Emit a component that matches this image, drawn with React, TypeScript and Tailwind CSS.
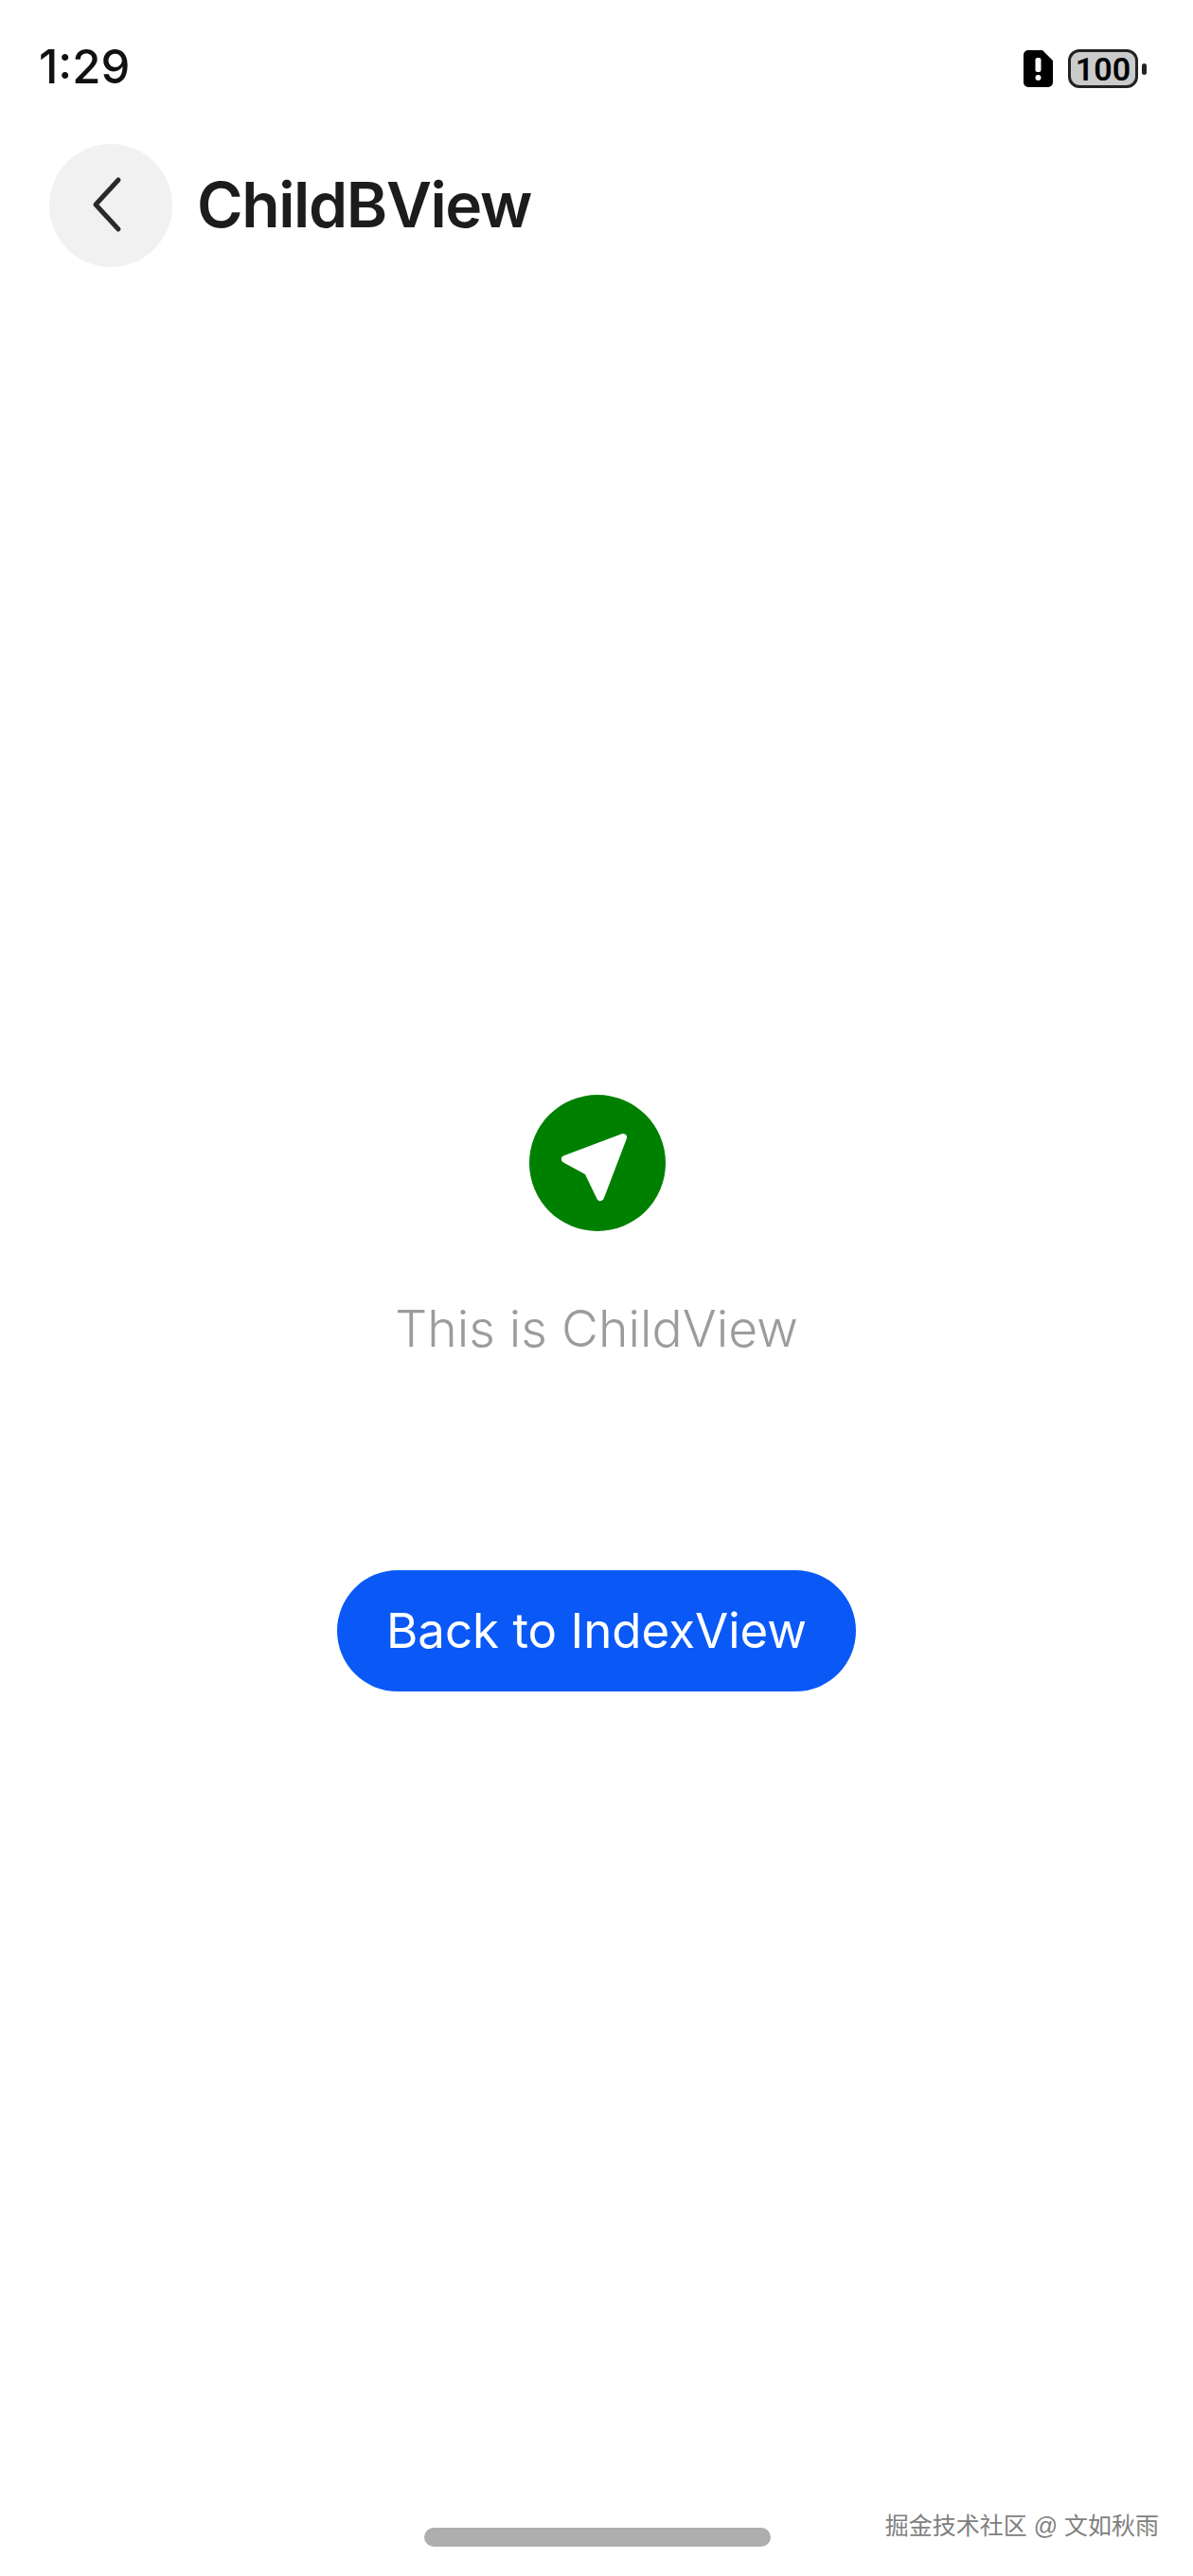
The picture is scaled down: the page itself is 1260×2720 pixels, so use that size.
const FONT = "font-['Inter','Noto_Sans',sans-serif]";

function StatusBar() {
  return (
    <div className="h-[152px] flex items-start justify-between pt-[46px] pl-[41px] pr-[49px]">
      <span className={`text-[49px] leading-[50px] font-medium text-[#111111] ${FONT}`}>1:29</span>
      <div className="flex items-center pt-[6px]">
        {/* sim warning */}
        <svg width="31" height="39" viewBox="0 0 31 39" className="mr-[16px]">
          <path d="M5 0H20L31 11V34a5 5 0 0 1-5 5H5a5 5 0 0 1-5-5V5a5 5 0 0 1 5-5Z" fill="#000000" />
          <rect x="12.5" y="8" width="6" height="15" rx="2" fill="#ffffff" />
          <rect x="12.5" y="26" width="6" height="6" rx="3" fill="#ffffff" />
        </svg>
        <div className="w-[74px] h-[41px] rounded-[12px] border-[3px] border-[#222222] bg-[#cbcbcb] flex items-center justify-center">
          <span className="text-[34px] leading-none font-semibold text-black font-['Roboto',sans-serif]">100</span>
        </div>
        <div className="w-[5px] h-[12px] rounded-full bg-[#222222] ml-[4px]" />
      </div>
    </div>
  );
}

function Header() {
  return (
    <div className="h-[130px] flex items-center pl-[52px]">
      <button className="w-[130px] h-[130px] rounded-full bg-[#f1f1f1] flex items-center justify-center">
        <svg width="40" height="60" viewBox="0 0 40 60" fill="none" className="mr-[6px] mb-[2px]">
          <path d="M31 4 7 30l24 26" stroke="#2a2a2a" strokeWidth="5" strokeLinecap="round" strokeLinejoin="round" />
        </svg>
      </button>
      <h1 className={`ml-[26px] mb-[2px] text-[66px] leading-none font-semibold tracking-[-1.4px] text-[#1c1c1c] ${FONT}`}>ChildBView</h1>
    </div>
  );
}

function NavBadge() {
  return (
    <div className="w-[144px] h-[144px] ml-[2px] rounded-full bg-[#008000]">
      <svg width="144" height="144" viewBox="0 0 144 144">
        <path
          d="M99 45 38 68l24 13 13 27Z"
          fill="#ffffff"
          stroke="#ffffff"
          strokeWidth="8"
          strokeLinejoin="round"
        />
      </svg>
    </div>
  );
}

export default function App() {
  return (
    <div className="w-[1260px] h-[2720px] bg-white flex flex-col overflow-hidden relative">
      <StatusBar />
      <Header />
      <main className="flex flex-col items-center pt-[874px]">
        <NavBadge />
        <p className={`mt-[68px] text-[53.5px] leading-[70px] font-light text-[#9c9c9c] ${FONT}`}>This is ChildView</p>
        <button className={`mt-[220px] w-[548px] h-[128px] rounded-[64px] bg-[#0a59f7] text-white text-[51px] ${FONT}`}>
          Back to IndexView
        </button>
      </main>
      <div className="mt-auto pb-[31px] pl-[2px] flex justify-center">
        <div className="w-[366px] h-[20px] rounded-full bg-[#aeaeae]" />
      </div>
      {/* watermark sits over the page */}
      <span className="absolute right-[36px] bottom-[38px] text-[25px] leading-[30px] text-[#808080] [text-shadow:1px_1px_0_#ffffff] font-['Liberation_Sans','Noto_Sans_CJK_SC',sans-serif]">
        掘金技术社区 @ 文如秋雨
      </span>
    </div>
  );
}
